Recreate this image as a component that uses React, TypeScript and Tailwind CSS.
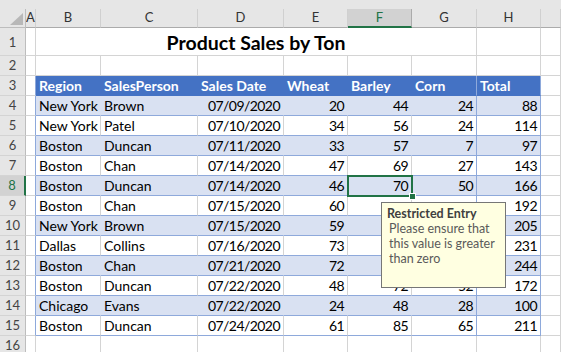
import clsx from "clsx";
import { FC } from "react";

type Row = {
  region: string;
  person: string;
  date: string;
  wheat: number;
  barley: number | null;
  corn: number | null;
  total: number;
};

// F and G for rows 9-12 sit under the input message, so they are left blank
const rows: Row[] = [
  { region: "New York", person: "Brown", date: "07/09/2020", wheat: 20, barley: 44, corn: 24, total: 88 },
  { region: "New York", person: "Patel", date: "07/10/2020", wheat: 34, barley: 56, corn: 24, total: 114 },
  { region: "Boston", person: "Duncan", date: "07/11/2020", wheat: 33, barley: 57, corn: 7, total: 97 },
  { region: "Boston", person: "Chan", date: "07/14/2020", wheat: 47, barley: 69, corn: 27, total: 143 },
  { region: "Boston", person: "Duncan", date: "07/14/2020", wheat: 46, barley: 70, corn: 50, total: 166 },
  { region: "Boston", person: "Chan", date: "07/15/2020", wheat: 60, barley: null, corn: null, total: 192 },
  { region: "New York", person: "Brown", date: "07/15/2020", wheat: 59, barley: null, corn: null, total: 205 },
  { region: "Dallas", person: "Collins", date: "07/16/2020", wheat: 73, barley: null, corn: null, total: 231 },
  { region: "Boston", person: "Chan", date: "07/21/2020", wheat: 72, barley: null, corn: null, total: 244 },
  { region: "Boston", person: "Duncan", date: "07/22/2020", wheat: 48, barley: 72, corn: 52, total: 172 },
  { region: "Chicago", person: "Evans", date: "07/22/2020", wheat: 24, barley: 48, corn: 28, total: 100 },
  { region: "Boston", person: "Duncan", date: "07/24/2020", wheat: 61, barley: 85, corn: 65, total: 211 },
];

const widths = [
  "w-[10px]",
  "w-[65px]",
  "w-[97px]",
  "w-[86px]",
  "w-[64px]",
  "w-[64px]",
  "w-[65px]",
  "w-[64px]",
  "flex-1",
];

const letters = ["A", "B", "C", "D", "E", "F", "G", "H", ""];

const RowHead: FC<{ n: number; tall?: boolean; active?: boolean }> = ({ n, tall, active }) => (
  <div
    className={clsx(
      "w-[26px] shrink-0 flex justify-center text-[13px] border-b border-b-[#d4d4d4]",
      tall ? "h-[28px] items-end pb-[3px]" : "h-[20px] items-center",
      active
        ? "bg-[#d2d2d2] text-[#217346] border-r-2 border-r-[#217346]"
        : "bg-[#e6e6e6] text-[#444] border-r border-r-[#bdbdbd]"
    )}
  >
    {n}
  </div>
);

const Empty: FC<{ w: string; tall?: boolean }> = ({ w, tall }) => (
  <div
    className={clsx(
      w,
      "shrink-0 border-r border-b border-[#d4d4d4]",
      tall ? "h-[28px]" : "h-[20px]"
    )}
  />
);

const App: FC = () => {
  return (
    <div className="relative w-[561px] h-[352px] overflow-hidden bg-white font-['Lato',sans-serif] text-black">
      <div className="h-[9px] bg-[#e6e6e6]" />
      {/* column letters */}
      <div className="flex h-[19px] bg-[#e6e6e6]">
        <div className="relative w-[26px] shrink-0 border-r border-b border-[#bdbdbd]">
          <svg className="absolute right-[2px] bottom-[2px]" width="13" height="12" viewBox="0 0 13 12">
            <polygon points="13,0 13,12 0,12" fill="#b8b8b8" />
          </svg>
        </div>
        {letters.map((l, i) => (
          <div
            key={i}
            className={clsx(
              widths[i],
              "shrink-0 flex items-center justify-center text-[13px]",
              l === "F"
                ? "bg-[#d2d2d2] text-[#217346] border-b-2 border-b-[#217346] border-r border-r-[#ababab]"
                : "text-[#333] border-b border-b-[#ababab] border-r border-r-[#d0d0d0]"
            )}
          >
            {l}
          </div>
        ))}
      </div>

      {/* row 1 title, merged B1:G1 */}
      <div className="flex">
        <RowHead n={1} tall />
        <Empty w="w-[10px]" tall />
        <div className="w-[441px] h-[28px] shrink-0 flex items-center justify-center pt-[2px] border-r border-b border-[#d4d4d4] text-[19.5px] font-bold">
          Product Sales by Ton
        </div>
        <Empty w="w-[64px]" tall />
        <Empty w="flex-1" tall />
      </div>

      {/* row 2 */}
      <div className="flex">
        <RowHead n={2} />
        {widths.map((w, i) => (
          <Empty key={i} w={w} />
        ))}
      </div>

      {/* row 3 header */}
      <div className="flex">
        <RowHead n={3} />
        <div className="w-[10px] h-[20px] shrink-0 border-r border-r-[#8ea9db] border-b border-b-[#d4d4d4]" />
        {["Region", "SalesPerson", "Sales Date", "Wheat", "Barley", "Corn", "Total"].map((h, i) => (
          <div
            key={h}
            className={clsx(
              widths[i + 1],
              "h-[20px] shrink-0 flex items-center whitespace-nowrap pl-[3px] bg-[#4472c4] text-white font-bold text-[14px] border-b border-b-[#4472c4] border-r",
              i >= 5 ? "border-r-[#8ea9db]" : "border-r-[#4472c4]"
            )}
          >
            {h}
          </div>
        ))}
        <Empty w="flex-1" />
      </div>

      {/* data rows */}
      {rows.map((r, idx) => {
        const band = idx % 2 === 0;
        const n = idx + 4;
        const inner = band ? "border-r-[#d9e1f2]" : "border-r-[#d4d4d4]";
        const base = clsx(
          "h-[20px] shrink-0 flex items-center whitespace-nowrap px-[3px] text-[14px] border-r border-b border-b-[#8ea9db]",
          band ? "bg-[#d9e1f2]" : "bg-white"
        );
        const num = "justify-end tracking-[-0.04em]";
        return (
          <div key={n} className="flex">
            <RowHead n={n} active={n === 8} />
            <div className="w-[10px] h-[20px] shrink-0 border-r border-r-[#8ea9db] border-b border-b-[#d4d4d4]" />
            <div className={clsx(base, "w-[65px]", inner)}>{r.region}</div>
            <div className={clsx(base, "w-[97px]", inner)}>{r.person}</div>
            <div className={clsx(base, "w-[86px]", num, inner)}>{r.date}</div>
            <div className={clsx(base, "w-[64px]", num, inner)}>{r.wheat}</div>
            <div className={clsx(base, "w-[64px]", num, inner)}>{r.barley}</div>
            <div className={clsx(base, "w-[65px] border-r-[#8ea9db]", num)}>{r.corn}</div>
            <div className={clsx(base, "w-[64px] border-r-[#8ea9db]", num)}>{r.total}</div>
            <Empty w="flex-1" />
          </div>
        );
      })}

      {/* row 16 */}
      <div className="flex">
        <RowHead n={16} />
        {widths.map((w, i) => (
          <Empty key={i} w={w} />
        ))}
      </div>

      {/* active cell F8 */}
      <div className="absolute left-[347px] top-[175px] w-[66px] h-[22px] border-2 border-[#217346]" />
      <div className="absolute left-[409px] top-[193px] w-[7px] h-[7px] bg-[#217346] border border-white" />

      {/* input message */}
      <div className="absolute left-[381px] top-[202px] w-[125px] h-[86px] bg-[#ffffe1] border border-[#767676] px-[5px] pt-[3px] text-[12.5px] leading-[15px]">
        <div className="font-bold text-[#404040]">Restricted Entry</div>
        <div className="pl-[2px] text-[#5a5a5a]">
          Please ensure that
          <br />
          this value is greater
          <br />
          than zero
        </div>
      </div>
    </div>
  );
};

export default App;
